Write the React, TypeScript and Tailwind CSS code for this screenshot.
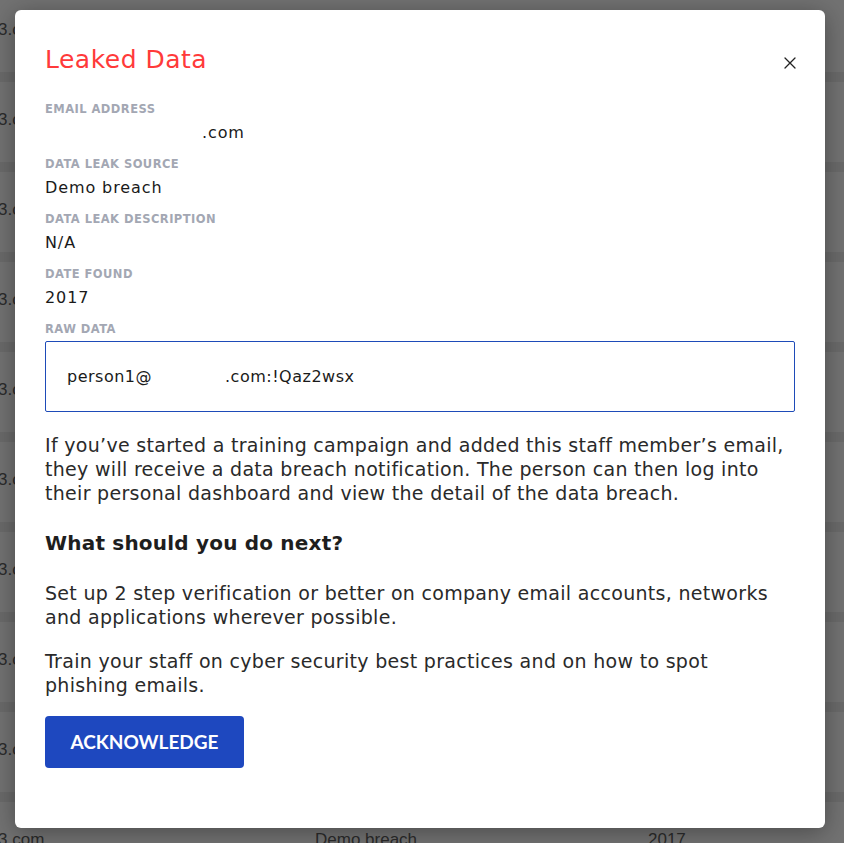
import React from 'react';

const rows = [0, 1, 2, 3, 4, 5, 6, 7, 8];

const Field = ({ label, children }: { label: string; children: React.ReactNode }) => (
  <div className="flex flex-col">
    <span className="text-[11.5px] leading-[16px] font-bold uppercase tracking-[0.45px] text-[#a3a7b3]">{label}</span>
    <span className="text-[16px] leading-[24px] tracking-[0.9px] text-[#1a1a1a] mt-[4px]">{children}</span>
  </div>
);

const Lines = ({ lines, className }: { lines: string[]; className?: string }) => (
  <p className={`text-[19px] leading-[24px] tracking-[0.3px] text-[#2a2a2a] ${className ?? ''}`}>
    {lines.map((l) => (
      <span key={l} className="block whitespace-nowrap">{l}</span>
    ))}
  </p>
);

export default function App() {
  return (
    <div className="relative w-full h-[843px] overflow-hidden bg-[#727272]" style={{ fontFamily: '"DejaVu Sans", "Noto Sans", sans-serif' }}>
      {/* Background table under overlay */}
      <div className="absolute inset-0 flex flex-col" style={{ fontFamily: '"Liberation Sans", Arial, sans-serif' }}>
        {rows.map((r) => (
          <div key={r} className="h-[90px] shrink-0 flex flex-col">
            <div className="h-[60px] flex items-center text-[17px] text-[#2b2b2b] -ml-[2px]">3.com</div>
            <div className="h-[12px]" />
            <div className="h-[10px] bg-[#6a6a6a]" />
          </div>
        ))}
        <div className="h-[60px] shrink-0 flex items-center text-[17px] text-[#2b2b2b] -ml-[2px]">
          <span className="w-[317px]">3.com</span>
          <span className="w-[333px]">Demo breach</span>
          <span>2017</span>
        </div>
      </div>

      {/* Modal */}
      <div className="relative ml-[15px] mt-[10px] w-[810px] h-[818px] bg-white rounded-[6px] shadow-[0_4px_24px_rgba(0,0,0,0.35)] px-[30px] pt-[34px]">
        <button className="absolute right-[28px] top-[46px] w-[14px] h-[14px] flex items-center justify-center text-[#222]">
          <svg width="12" height="12" viewBox="0 0 12 12" fill="none" stroke="currentColor" strokeWidth="1.3" strokeLinecap="round">
            <path d="M1 1L11 11M11 1L1 11" />
          </svg>
        </button>

        <h1 className="text-[25px] leading-[32px] tracking-[0.5px] text-[#ff3a3a]">Leaked Data</h1>

        <div className="mt-[25px] flex flex-col gap-[11px]">
          <Field label="Email address">
            <span className="pl-[157px]">.com</span>
          </Field>
          <Field label="Data leak source">Demo breach</Field>
          <Field label="Data leak description">N/A</Field>
          <Field label="Date found">2017</Field>
          <div className="flex flex-col">
            <span className="text-[11.5px] leading-[16px] font-bold uppercase tracking-[0.45px] text-[#a3a7b3]">Raw data</span>
            <div className="mt-[4px] h-[71px] border border-[#1e4bb8] rounded-[2px] flex items-center px-[21px] text-[16px] tracking-[0.5px] text-[#1a1a1a]">
              <span>person1@</span>
              <span className="ml-[73px]">.com:!Qaz2wsx</span>
            </div>
          </div>
        </div>

        <Lines
          className="mt-[21px]"
          lines={[
            'If you’ve started a training campaign and added this staff member’s email,',
            'they will receive a data breach notification. The person can then log into',
            'their personal dashboard and view the detail of the data breach.',
          ]}
        />

        <h2 className="mt-[23px] text-[20px] leading-[30px] font-bold tracking-[0.2px] text-[#1e1e1e]">What should you do next?</h2>

        <Lines
          className="mt-[23px]"
          lines={[
            'Set up 2 step verification or better on company email accounts, networks',
            'and applications wherever possible.',
          ]}
        />
        <Lines
          className="mt-[20px]"
          lines={['Train your staff on cyber security best practices and on how to spot', 'phishing emails.']}
        />

        <button className="mt-[19px] w-[199px] h-[52px] rounded-[4px] bg-[#1e48bf] text-white text-[19px] font-bold uppercase" style={{ fontFamily: 'Lato, sans-serif' }}>
          Acknowledge
        </button>
      </div>
    </div>
  );
}
